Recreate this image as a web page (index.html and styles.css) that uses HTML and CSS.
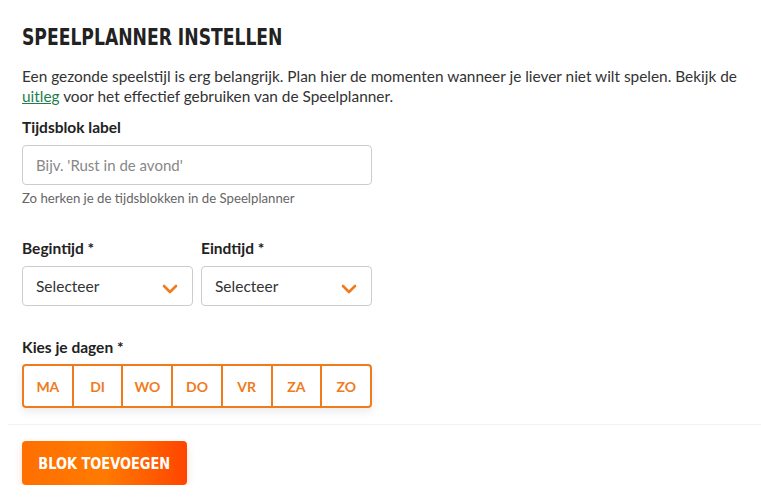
FILE: index.html
```html
<!DOCTYPE html>
<html lang="nl">
<head>
    <meta charset="UTF-8">
    <meta name="viewport" content="width=device-width, initial-scale=1.0">
    <title>Speelplanner instellen</title>
    <link rel="stylesheet" href="styles.css">
</head>
<body>
    <div class="planner">
        <h1 class="title"><span>SPEELPLANNER INSTELLEN</span></h1>
        <p class="intro">Een gezonde speelstijl is erg belangrijk. Plan hier de momenten wanneer je liever niet wilt spelen. Bekijk de <a href="#">uitleg</a> voor het effectief gebruiken van de Speelplanner.</p>

        <div class="field">
            <label class="label">Tijdsblok label</label>
            <input class="input" type="text" placeholder="Bijv. 'Rust in de avond'">
            <div class="hint">Zo herken je de tijdsblokken in de Speelplanner</div>
        </div>

        <div class="times">
            <div class="time">
                <label class="label">Begintijd *</label>
                <div class="select">
                    <span>Selecteer</span>
                    <svg width="16" height="10" viewBox="0 0 16 10"><path d="M2 2 L8 8 L14 2" fill="none" stroke="#f07b1d" stroke-width="2.6" stroke-linecap="round" stroke-linejoin="round"/></svg>
                </div>
            </div>
            <div class="time">
                <label class="label">Eindtijd *</label>
                <div class="select">
                    <span>Selecteer</span>
                    <svg width="16" height="10" viewBox="0 0 16 10"><path d="M2 2 L8 8 L14 2" fill="none" stroke="#f07b1d" stroke-width="2.6" stroke-linecap="round" stroke-linejoin="round"/></svg>
                </div>
            </div>
        </div>

        <div class="field days-field">
            <label class="label">Kies je dagen *</label>
            <ul class="days">
                <li>MA</li>
                <li>DI</li>
                <li>WO</li>
                <li>DO</li>
                <li>VR</li>
                <li>ZA</li>
                <li>ZO</li>
            </ul>
        </div>
    </div>
    <div class="footer">
        <button class="btn"><span>BLOK TOEVOEGEN</span></button>
    </div>
</body>
</html>
```

FILE: styles.css
```css
*{
    padding: 0;
    margin: 0;
    box-sizing: border-box;
}
body{
    background: #fff;
    font-family: Lato, "Open Sans", sans-serif;
    color: #333;
}
.planner{
    padding: 24px 22px 0 22px;
}
.title{
    font-family: "DejaVu Sans Condensed", "DejaVu Sans", sans-serif;
    font-weight: bold;
    font-size: 23px;
    line-height: 26px;
    color: #222;
}
.title span{
    display: inline-block;
    transform: scaleX(0.83);
    transform-origin: left center;
    white-space: nowrap;
}
.intro{
    margin-top: 16px;
    font-size: 15.4px;
    line-height: 20px;
    color: #333;
}
.intro a{
    color: #1d7f4e;
}
.field{
    margin-top: 12px;
}
.label{
    display: block;
    font-size: 15.5px;
    font-weight: bold;
    line-height: 18px;
    color: #222;
}
.input{
    display: block;
    width: 350px;
    height: 40px;
    margin-top: 9px;
    border: 1px solid #ccc;
    border-radius: 4px;
    padding: 0 13px;
    font-family: inherit;
    font-size: 15px;
    color: #333;
}
.input::placeholder{
    color: #888;
}
.hint{
    margin-top: 5px;
    font-size: 13.2px;
    line-height: 16px;
    color: #666;
}
.times{
    display: flex;
    gap: 8px;
    margin-top: 33px;
}
.time{
    width: 171px;
}
.select{
    display: flex;
    align-items: center;
    justify-content: space-between;
    height: 40px;
    margin-top: 9px;
    border: 1px solid #ccc;
    border-radius: 4px;
    padding: 0 14px 0 13px;
    font-size: 15.5px;
    color: #333;
}
.select svg{
    margin-top: 5px;
}
.days-field{
    margin-top: 32px;
}
.days{
    list-style: none;
    display: flex;
    width: 350px;
    height: 44px;
    margin-top: 8px;
    border: 2px solid #f07b1d;
    border-radius: 4px;
    box-shadow: 0 4px 8px rgba(0,0,0,0.08);
}
.days>li{
    flex: 1;
    display: flex;
    align-items: center;
    justify-content: center;
    font-size: 14px;
    font-weight: bold;
    color: #f07b1d;
    border-left: 2px solid #f07b1d;
}
.days>li:first-child{
    border-left: none;
}
.footer{
    margin: 16px 0 0 8px;
    border-top: 1px solid #f2f2f2;
    padding: 16px 0 0 14px;
}
.btn{
    width: 165px;
    height: 44px;
    border: none;
    border-radius: 4px;
    background: linear-gradient(90deg, #ff6f00 0%, #ff7a00 50%, #ff4500 100%);
    color: #fff;
    font-family: "DejaVu Sans Condensed", "DejaVu Sans", sans-serif;
    font-weight: bold;
    font-size: 16px;
    box-shadow: 0 4px 8px rgba(255,100,0,0.2);
    cursor: pointer;
}
.btn span{
    display: inline-block;
    transform: scaleX(0.9);
    white-space: nowrap;
}
```
